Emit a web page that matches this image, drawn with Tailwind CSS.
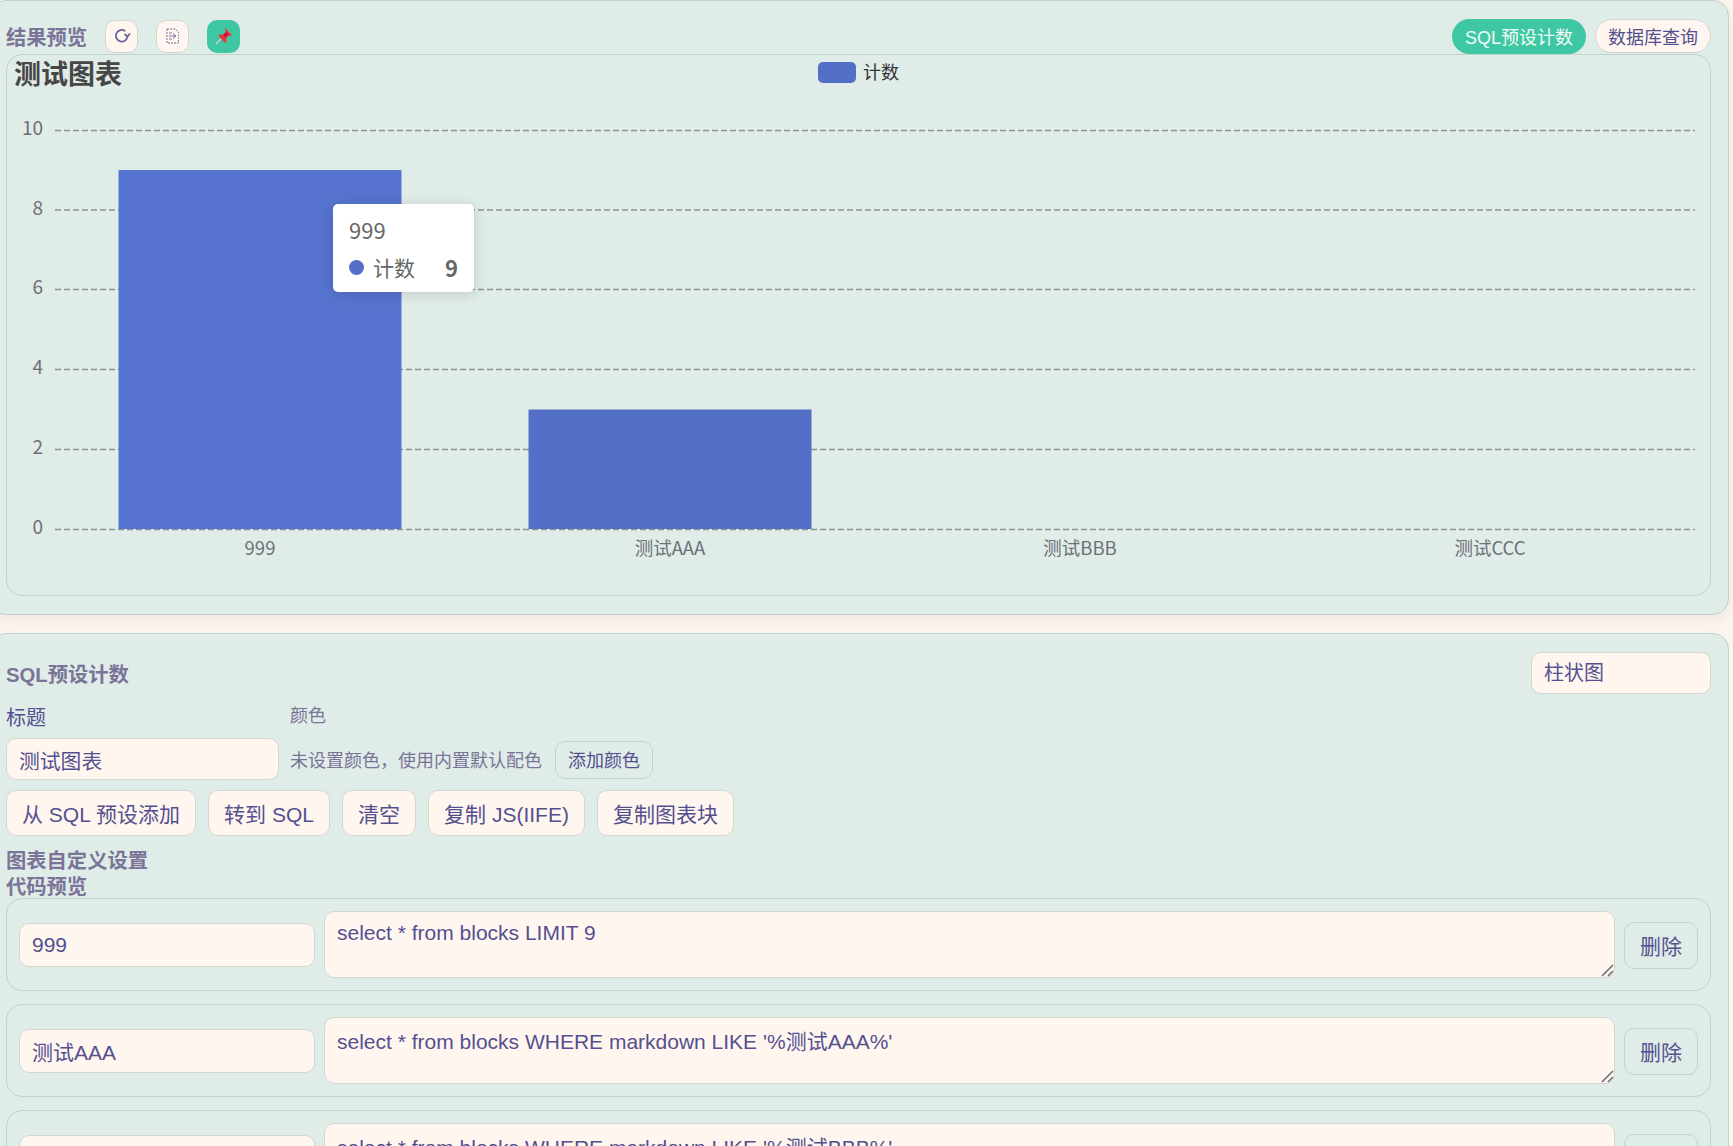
<!DOCTYPE html>
<html lang="zh-CN">
<head>
    <meta charset="UTF-8">
    <meta name="viewport" content="width=device-width, initial-scale=1.0">
    <title>结果预览</title>
    <script src="https://cdn.jsdelivr.net/npm/@tailwindcss/browser@4"></script>
</head>
<body class="bg-[#fcf4ef] h-[1146px] overflow-hidden font-['Liberation_Sans','Noto_Sans_CJK_SC',sans-serif] text-[#54508f]">

    <!-- 结果预览 -->
    <section class="ml-[-10px] w-[1739px] h-[615px] bg-[#e0ece7] border border-[#bfd4cc] rounded-[16px] pl-[15px] pr-[17px] pt-[18px] shadow-[0_4px_12px_rgba(120,60,60,0.07)]">
        <header class="flex items-center h-[34px]">
            <h2 class="w-[99px] text-[20.300px] font-bold text-[#7a7598] pt-[5px]">结果预览</h2>
            <button class="w-[33px] h-[33px] flex items-center justify-center bg-[#fff6f0] border border-[#d3d8cf] rounded-[10px]">
                <svg width="18" height="18" viewBox="0 0 18 18" fill="none" stroke="#6a6698" stroke-width="1.8"><path d="M14.5 9a5.800 5.800 0 1 1-2.200-4.800"/><path d="M17 6.500l-2.500 3-3-2.500" stroke-width="1.700"/></svg>
            </button>
            <button class="ml-[18px] w-[33px] h-[33px] flex items-center justify-center bg-[#fff6f0] border border-[#d3d8cf] rounded-[10px]">
                <svg width="14" height="16" viewBox="0 0 14 16" fill="none" stroke="#77739c" stroke-width="1"><path d="M1 1h8l3.500 3v1M1 1v14h11.500V12" stroke-dasharray="2 1"/><path d="M3 8h6M7 5.500L10 8l-3 2.500M3 5h3M3 11h3"/><path d="M12.500 6.500v4" stroke-dasharray="1.500 1"/></svg>
            </button>
            <button class="ml-[18px] w-[33px] h-[33px] flex items-center justify-center bg-[#3ec7a3] rounded-[10px]">
                <svg width="20" height="20" viewBox="0 0 20 20"><path d="M2 18l5.500-5.500" stroke="#c9cfd0" stroke-width="1.600"/><path d="M11 2l7 7-2 1-1-.5-3 3 .5 3-1.500 1.500L4.500 10 6 8.500l3 .5 3-3-.5-1z" fill="#f0323c"/><path d="M9 9l3-3 2.500 2.500-3 3z" fill="#c8103c"/></svg>
            </button>
            <button class="ml-auto h-[35px] w-[134px] pt-[4px] bg-[#3ec7a3] text-[#f2fbf7] text-[18px] rounded-full">SQL预设计数</button>
            <button class="ml-[9px] h-[34px] w-[116px] pt-[4px] bg-[#fff6f0] border border-[#d3d8cf] text-[18px] rounded-full">数据库查询</button>
        </header>

        <div class="relative mt-[1px] h-[542px] border border-[#bfd4cc] rounded-[16px] overflow-hidden">
            <svg width="1703" height="540" viewBox="7 55 1703 540" class="block font-['Noto_Sans_CJK_SC',sans-serif]">
                <text x="14" y="84" font-size="27" font-weight="700" fill="#464646">测试图表</text>
                <rect x="818" y="62" width="38" height="21" rx="5" fill="#536fc6"/>
                <text x="863" y="79" font-size="18" fill="#333333">计数</text>

                <g stroke="#8a9591" stroke-width="1.300" stroke-dasharray="6 3">
                    <line x1="55" x2="1695" y1="130.500" y2="130.500"/>
                    <line x1="55" x2="1695" y1="210" y2="210"/>
                    <line x1="55" x2="1695" y1="289.500" y2="289.500"/>
                    <line x1="55" x2="1695" y1="369.500" y2="369.500"/>
                    <line x1="55" x2="1695" y1="449.500" y2="449.500"/>
                    <line x1="55" x2="1695" y1="529.500" y2="529.500"/>
                </g>
                <g font-size="19" fill="#6e7079" text-anchor="end">
                    <text x="43" y="135">10</text>
                    <text x="43" y="215">8</text>
                    <text x="43" y="294">6</text>
                    <text x="43" y="374">4</text>
                    <text x="43" y="454">2</text>
                    <text x="43" y="534">0</text>
                </g>
                <rect x="118.500" y="170" width="283" height="359" fill="#5674cf"/>
                <rect x="528.500" y="409.500" width="283" height="119.500" fill="#536fc6"/>
                <g font-size="18.500" fill="#6e7079" text-anchor="middle">
                    <text x="260" y="555">999</text>
                    <text x="670" y="555">测试AAA</text>
                    <text x="1080" y="555">测试BBB</text>
                    <text x="1490" y="555">测试CCC</text>
                </g>
            </svg>
            <!-- tooltip -->
            <div class="absolute left-[326px] top-[149px] w-[141px] h-[88px] bg-white rounded-[5px] shadow-[0_2px_14px_rgba(0,0,0,0.15)] px-[16px] pt-[10px] text-[#666666] font-['Noto_Sans_CJK_SC',sans-serif]">
                <div class="text-[22px] leading-[30px]">999</div>
                <div class="flex items-center mt-[8px] text-[21px] leading-[30px]">
                    <span class="w-[15px] h-[15px] rounded-full bg-[#536fc6]"></span>
                    <span class="ml-[9px]">计数</span>
                    <span class="ml-auto font-bold text-[22px]">9</span>
                </div>
            </div>
        </div>
    </section>

    <!-- SQL预设计数 -->
    <section class="mt-[18px] ml-[-10px] w-[1739px] h-[600px] bg-[#e0ece7] border border-[#bfd4cc] rounded-[16px] pl-[15px] pr-[17px] pt-[18px]">
        <div class="flex items-center justify-between h-[42px]">
            <h2 class="pt-[5px] text-[20.300px] font-bold text-[#7a7598]">SQL预设计数</h2>
            <select class="appearance-none w-[180px] h-[42px] bg-[#fff6f0] border border-[#d3d8cf] rounded-[10px] px-[12px] text-[20px]">
                <option>柱状图</option>
            </select>
        </div>

        <div class="flex h-[44px]">
            <label class="w-[284px] pt-[9px] text-[20px] leading-[30px]">标题</label>
            <label class="pt-[9px] text-[18px] leading-[27px] text-[#7a7598]">颜色</label>
        </div>

        <div class="flex items-center h-[42px]">
            <input value="测试图表" class="w-[273px] h-[42px] pt-[2px] bg-[#fff6f0] border border-[#d3d8cf] rounded-[10px] px-[12px] text-[20.800px]">
            <span class="ml-[11px] pt-[4px] w-[265px] text-[18px] text-[#7a7598]">未设置颜色，使用内置默认配色</span>
            <button class="w-[98px] h-[38px] mt-[2px] pt-[2px] border border-[#bfd4cc] rounded-[10px] text-[18px]">添加颜色</button>
        </div>

        <div class="flex gap-[12px] mt-[10px]">
            <button class="w-[190px] h-[46px] pt-[4px] bg-[#fff6f0] border border-[#d3d8cf] rounded-[10px] text-[21px]">从 SQL 预设添加</button>
            <button class="w-[122px] h-[46px] pt-[4px] bg-[#fff6f0] border border-[#d3d8cf] rounded-[10px] text-[21px]">转到 SQL</button>
            <button class="w-[74px] h-[46px] pt-[4px] bg-[#fff6f0] border border-[#d3d8cf] rounded-[10px] text-[21px]">清空</button>
            <button class="w-[157px] h-[46px] pt-[4px] bg-[#fff6f0] border border-[#d3d8cf] rounded-[10px] text-[21px]">复制 JS(IIFE)</button>
            <button class="w-[137px] h-[46px] pt-[4px] bg-[#fff6f0] border border-[#d3d8cf] rounded-[10px] text-[21px]">复制图表块</button>
        </div>

        <h3 class="mt-[12px] text-[20.300px] leading-[26px] font-bold text-[#7a7598]">图表自定义设置</h3>
        <h3 class="mb-[-2px] text-[20.300px] leading-[26px] font-bold text-[#7a7598]">代码预览</h3>

        <div class="flex flex-col gap-[13px]">
            <div class="flex items-center h-[93px] border border-[#bfd4cc] rounded-[16px] pl-[12px] pr-[12px]">
                <input value="999" class="w-[296px] h-[44px] pt-[1px] bg-[#fff6f0] border border-[#d3d8cf] rounded-[10px] px-[12px] text-[21px]">
                <div class="relative ml-[9px] w-[1292px] h-[67px]">
                    <textarea class="block w-full h-full resize-none bg-[#fff6f0] border border-[#d3d8cf] rounded-[10px] px-[12px] pt-[9px] text-[21px] leading-[24px]">select * from blocks LIMIT 9</textarea>
                    <svg class="absolute right-[1px] bottom-[1px] pointer-events-none" width="13" height="13" viewBox="0 0 13 13" stroke="#6b6b6b" stroke-width="1.500"><path d="M1 12L12 1M7 12l5-5"/></svg>
                </div>
                <button class="ml-[9px] w-[74px] h-[47px] pt-[3px] mt-[1px] border border-[#bfd4cc] rounded-[10px] text-[21px]">删除</button>
            </div>
            <div class="flex items-center h-[93px] border border-[#bfd4cc] rounded-[16px] pl-[12px] pr-[12px]">
                <input value="测试AAA" class="w-[296px] h-[44px] pt-[1px] bg-[#fff6f0] border border-[#d3d8cf] rounded-[10px] px-[12px] text-[21px]">
                <div class="relative ml-[9px] w-[1292px] h-[67px]">
                    <textarea class="block w-full h-full resize-none bg-[#fff6f0] border border-[#d3d8cf] rounded-[10px] px-[12px] pt-[12px] text-[21px] leading-[24px]">select * from blocks WHERE markdown LIKE '%测试AAA%'</textarea>
                    <svg class="absolute right-[1px] bottom-[1px] pointer-events-none" width="13" height="13" viewBox="0 0 13 13" stroke="#6b6b6b" stroke-width="1.500"><path d="M1 12L12 1M7 12l5-5"/></svg>
                </div>
                <button class="ml-[9px] w-[74px] h-[47px] pt-[3px] mt-[1px] border border-[#bfd4cc] rounded-[10px] text-[21px]">删除</button>
            </div>
            <div class="flex items-center h-[93px] border border-[#bfd4cc] rounded-[16px] pl-[12px] pr-[12px]">
                <input value="测试BBB" class="w-[296px] h-[44px] pt-[1px] bg-[#fff6f0] border border-[#d3d8cf] rounded-[10px] px-[12px] text-[21px]">
                <div class="relative ml-[9px] w-[1292px] h-[67px]">
                    <textarea class="block w-full h-full resize-none bg-[#fff6f0] border border-[#d3d8cf] rounded-[10px] px-[12px] pt-[12px] text-[21px] leading-[24px]">select * from blocks WHERE markdown LIKE '%测试BBB%'</textarea>
                    <svg class="absolute right-[1px] bottom-[1px] pointer-events-none" width="13" height="13" viewBox="0 0 13 13" stroke="#6b6b6b" stroke-width="1.500"><path d="M1 12L12 1M7 12l5-5"/></svg>
                </div>
                <button class="ml-[9px] w-[74px] h-[47px] pt-[3px] mt-[1px] border border-[#bfd4cc] rounded-[10px] text-[21px]">删除</button>
            </div>
        </div>
    </section>
</body>
</html>
